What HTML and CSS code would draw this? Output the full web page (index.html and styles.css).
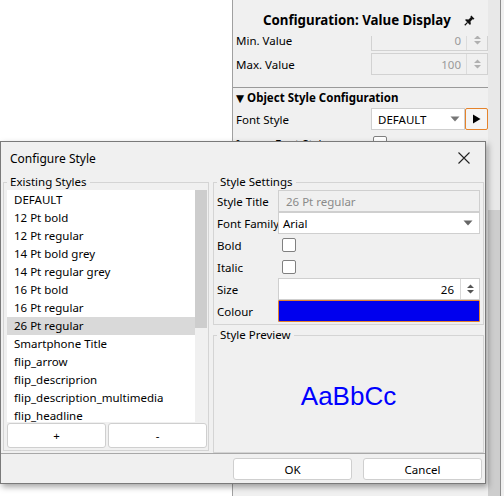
FILE: index.html
```html
<!DOCTYPE html>
<html>
<head>
<meta charset="utf-8">
<link rel="stylesheet" href="styles.css">
</head>
<body>
<div class="app">
  <div class="blank"></div>
  <div class="panel">
    <div class="pmain">
      <div class="phead">
        <span class="ptitle">Configuration: Value Display</span>
        <svg class="pin" width="12" height="12" viewBox="0 0 12 12"><g transform="rotate(45 6 6)"><path d="M3.8 0.5h4.4v1.2l-0.8 0.6v3l2.1 1.6v1.2H2.5V6.9l2.1-1.6v-3l-0.8-0.6z" fill="#111"/><path d="M6 8v4" stroke="#111" stroke-width="1.2"/></g></svg>
      </div>
      <div class="pscroll">
        <div class="pcontent">
          <div class="prow">
            <span class="plabel">Min. Value</span>
            <div class="pspin"><span class="sval">0</span><span class="sbtn"><svg width="9" height="12" viewBox="0 0 9 12"><path d="M1 5L4.5 1.5L8 5z M1 7L4.5 10.5L8 7z" fill="#b0b0b0"/></svg></span></div>
          </div>
          <div class="prow">
            <span class="plabel">Max. Value</span>
            <div class="pspin"><span class="sval">100</span><span class="sbtn"><svg width="9" height="12" viewBox="0 0 9 12"><path d="M1 5L4.5 1.5L8 5z M1 7L4.5 10.5L8 7z" fill="#b0b0b0"/></svg></span></div>
          </div>
          <div class="psep"></div>
          <div class="psec"><span class="tri">▼</span>Object Style Configuration</div>
          <div class="prow">
            <span class="plabel">Font Style</span>
            <div class="pfield">
              <div class="pcombo"><span>DEFAULT</span><svg width="10" height="6" viewBox="0 0 10 6"><path d="M0.5 0.5h9L5 5.5z" fill="#777"/></svg></div>
              <div class="pbtn"><svg width="9" height="10" viewBox="0 0 9 10"><path d="M1 0.5L8.5 5L1 9.5z" fill="#000"/></svg></div>
            </div>
          </div>
          <div class="prow">
            <span class="plabel">Ignore Font Style</span>
            <span class="chk pchk"></span>
          </div>
        </div>
      </div>
    </div>
    <div class="vscroll"><div class="vthumb"></div></div>
  </div>
  <div class="edge"></div>
</div>

<div class="dialog">
  <div class="titlebar">
    <span class="dtitle">Configure Style</span>
    <svg class="close" width="12" height="12" viewBox="0 0 12 12"><path d="M0.5 0.5L11.5 11.5M11.5 0.5L0.5 11.5" stroke="#222" stroke-width="1.1"/></svg>
  </div>
  <div class="dbody">
    <fieldset class="grp gleft">
      <legend>Existing Styles</legend>
      <div class="list">
        <div class="items">
          <div class="item">DEFAULT</div>
          <div class="item">12 Pt bold</div>
          <div class="item">12 Pt regular</div>
          <div class="item">14 Pt bold grey</div>
          <div class="item">14 Pt regular grey</div>
          <div class="item">16 Pt bold</div>
          <div class="item">16 Pt regular</div>
          <div class="item sel">26 Pt regular</div>
          <div class="item">Smartphone Title</div>
          <div class="item">flip_arrow</div>
          <div class="item">flip_descriprion</div>
          <div class="item">flip_description_multimedia</div>
          <div class="item">flip_headline</div>
        </div>
        <div class="lscroll"><div class="lthumb"></div></div>
      </div>
      <div class="lbtns">
        <div class="btn">+</div>
        <div class="btn">-</div>
      </div>
    </fieldset>
    <div class="rcol">
      <fieldset class="grp gset">
        <legend>Style Settings</legend>
        <div class="srow"><span>Style Title</span><div class="fld dis">26 Pt regular</div></div>
        <div class="srow"><span>Font Family</span><div class="fld combo"><span>Arial</span><svg width="10" height="6" viewBox="0 0 10 6"><path d="M0.5 0.5h9L5 5.5z" fill="#666"/></svg></div></div>
        <div class="srow"><span>Bold</span><span class="chk"></span></div>
        <div class="srow"><span>Italic</span><span class="chk"></span></div>
        <div class="srow"><span>Size</span><div class="fld spin"><span class="sval">26</span><span class="sbtn"><svg width="9" height="12" viewBox="0 0 9 12"><path d="M1 5L4.5 1.5L8 5z M1 7L4.5 10.5L8 7z" fill="#555"/></svg></span></div></div>
        <div class="srow"><span>Colour</span><div class="fld colour"></div></div>
      </fieldset>
      <fieldset class="grp gprev">
        <legend>Style Preview</legend>
        <div class="preview">AaBbCc</div>
      </fieldset>
    </div>
  </div>
  <div class="footer">
    <div class="btn fbtn">OK</div>
    <div class="btn fbtn">Cancel</div>
  </div>
</div>
</body>
</html>
```

FILE: styles.css
```css
* { box-sizing: border-box; }
html, body { margin: 0; padding: 0; }
body {
  width: 504px;
  height: 496px;
  overflow: hidden;
  position: relative;
  background: #fff;
  font-family: "Noto Sans", "DejaVu Sans", sans-serif;
  font-size: 11.5px;
  color: #000;
}

/* background panel */
.app { display: flex; width: 504px; height: 496px; }
.blank { width: 232px; background: #fff; }
.panel {
  width: 269px;
  display: flex;
  background: #f0f0f0;
  border-left: 1px solid #a0a0a0;
  border-right: 1px solid #8c8c8c;
}
.edge { width: 3px; background: #f0f0f0; }
.pmain { width: 255px; display: flex; flex-direction: column; }
.vscroll { width: 12px; background: #e8e8e8; display: flex; flex-direction: column; }
.vthumb { margin-top: 210px; flex: 1; background: #cdcdcd; }

.phead {
  height: 36px;
  display: flex;
  align-items: center;
  padding: 4px 0 0 30px;
  gap: 12px;
  background: #f0f0f0;
}
.ptitle { font-weight: 700; font-size: 13.3px; }
.pin { margin-top: 1px; }
.pscroll { flex: 1; overflow: hidden; }
.pcontent { margin-top: -8px; }
.prow {
  height: 24px;
  display: grid;
  grid-template-columns: 138px 117px;
  align-items: center;
}
.plabel { padding-left: 3px; white-space: nowrap; }
.pspin {
  height: 22px;
  border: 1px solid #d2d2d2;
  background: #f0f0f0;
  display: flex;
  align-items: center;
  color: #9a9a9a;
}
.sval { flex: 1; text-align: right; padding-right: 5px; }
.sbtn {
  width: 21px;
  height: 100%;
  border-left: 1px solid #dcdcdc;
  display: flex;
  align-items: center;
  justify-content: center;
}
.psep { height: 1px; background: #9a9a9a; margin-top: 11px; }
.psec { height: 19px; display: flex; align-items: center; padding-left: 3px; font-weight: 700; }
.tri { font-family: "DejaVu Sans", sans-serif; font-size: 10.5px; margin-right: 3px; }
.pfield { display: flex; height: 22px; }
.pcombo {
  width: 94px;
  background: #fff;
  border: 1px solid #cfcfcf;
  display: flex;
  align-items: center;
  justify-content: space-between;
  padding: 0 4px 0 6px;
}
.pbtn {
  width: 23px;
  border: 1px solid #e5832b;
  border-radius: 2px;
  background: #f5f5f5;
  display: flex;
  align-items: center;
  justify-content: center;
}
.chk {
  width: 14px;
  height: 14px;
  border: 1px solid #808080;
  border-radius: 2px;
  background: #fff;
  display: block;
}
.pchk { margin-left: 2px; }

/* dialog */
.dialog {
  position: absolute;
  left: 0;
  top: 141px;
  width: 486px;
  height: 343px;
  background: #f0f0f0;
  border: 1px solid #7a7a7a;
  box-shadow: 2px 3px 6px rgba(0, 0, 0, 0.35);
  display: flex;
  flex-direction: column;
}
.titlebar {
  height: 33px;
  display: flex;
  align-items: center;
  justify-content: space-between;
  padding: 0 15px 1px 9px;
}
.dtitle { font-size: 12px; }
.dbody {
  height: 278px;
  display: flex;
  gap: 4px;
  padding-left: 2px;
}
.grp {
  margin: 0;
  border: 1px solid #d4d4d4;
  min-width: 0;
}
.grp legend {
  padding: 0 3px;
  line-height: 14px;
  height: 14px;
}
.gleft {
  width: 206px;
  height: 276px;
  padding: 1px 1px 2px 3px;
  display: flex;
  flex-direction: column;
}
.list { height: 232px; display: flex; }
.items { flex: 1; background: #fff; overflow: hidden; padding-top: 1px; }
.item { height: 18px; line-height: 18px; padding-left: 7px; white-space: nowrap; }
.item.sel { background: #d9d9d9; }
.lscroll { width: 12px; background: #f0f0f0; display: flex; flex-direction: column; }
.lthumb { height: 138px; background: #cdcdcd; }
.lbtns { height: 26px; display: flex; gap: 2px; padding-top: 1px; }
.btn {
  background: #fff;
  border: 1px solid #cfcfcf;
  border-radius: 3px;
  display: flex;
  align-items: center;
  justify-content: center;
}
.lbtns .btn { width: 99px; height: 25px; }

.rcol { width: 271px; display: flex; flex-direction: column; gap: 3px; }
.gset { height: 150px; padding: 1px 3px 2px 3px; }
.srow {
  height: 22px;
  display: grid;
  grid-template-columns: 61px 202px;
  align-items: center;
  white-space: nowrap;
}
.fld {
  height: 22px;
  border: 1px solid #cfcfcf;
  display: flex;
  align-items: center;
}
.fld.dis { background: #f0f0f0; color: #8a8a8a; padding-left: 7px; }
.fld.combo { background: #fff; justify-content: space-between; padding: 0 6px 0 4px; }
.fld.spin { background: #fff; }
.fld.spin .sval { padding-right: 6px; }
.fld.spin .sbtn { width: 19px; border-left: 1px solid #d8d8d8; }
.srow .chk { margin-left: 4px; }
.fld.colour { background: #0000ee; border-color: #e3822c; border-radius: 1px; }
.gprev {
  flex: 1;
  padding: 0 3px 2px 3px;
  display: flex;
  align-items: center;
  justify-content: center;
}
.preview {
  font-family: "Liberation Sans", Arial, sans-serif;
  font-size: 26px;
  color: #0000ff;
  margin-top: 0;
}
.footer {
  flex: 1;
  border-top: 1px solid #a8a8a8;
  display: flex;
  justify-content: flex-end;
  gap: 11px;
  padding: 4px 3px 0 0;
}
.fbtn { width: 119px; height: 22px; }
```
